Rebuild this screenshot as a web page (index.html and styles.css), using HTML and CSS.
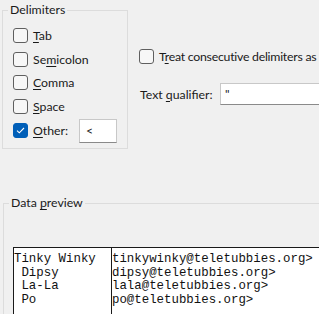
FILE: index.html
```html
<!DOCTYPE html>
<html lang="en">
<head>
<meta charset="UTF-8">
<title>Text Import Wizard</title>
<link rel="stylesheet" href="styles.css">
</head>
<body>

<div class="top-row">
    <!-- delimiters group -->
    <fieldset class="group delimiters">
        <legend>Delimiters</legend>
        <label class="row"><span class="box"></span><span><u>T</u>ab</span></label>
        <label class="row"><span class="box"></span><span>Se<u>m</u>icolon</span></label>
        <label class="row"><span class="box"></span><span><u>C</u>omma</span></label>
        <label class="row"><span class="box"></span><span><u>S</u>pace</span></label>
        <label class="row other"><span class="box checked">
            <svg width="15" height="15" viewBox="0 0 15 15"><path d="M4 7.6 L6.3 9.8 L11 5" fill="none" stroke="white" stroke-width="1.1"/></svg>
        </span><span class="other-text"><u>O</u>ther:</span><span class="field small">&lt;</span></label>
    </fieldset>

    <div class="options">
        <label class="row treat"><span class="box"></span><span class="treat-text">T<u>r</u>eat consecutive delimiters as</span></label>
        <div class="qualifier">
            <span class="qualifier-text">Text <u>q</u>ualifier:</span>
            <span class="field wide">"</span>
        </div>
    </div>
</div>

<fieldset class="group preview">
    <legend>Data <u>p</u>review</legend>
    <div class="grid">
        <div class="col first">Tinky Winky<br>&nbsp;Dipsy<br>&nbsp;La-La<br>&nbsp;Po</div>
        <div class="col">tinkywinky@teletubbies.org&gt;<br>dipsy@teletubbies.org&gt;<br>lala@teletubbies.org&gt;<br>po@teletubbies.org&gt;</div>
    </div>
</fieldset>

</body>
</html>
```

FILE: styles.css
```css
body, html {
    margin: 0;
    background-color: #f0f0f0;
    overflow: hidden;
}

body {
    width: 319px;
    height: 314px;
    font-family: 'Lato', 'Noto Sans', sans-serif;
    font-size: 12.3px;
    color: #1a1a1a;
}

u {
    text-decoration-thickness: 1px;
    text-underline-offset: 2px;
}

/* group boxes */
.group {
    border: 1px solid #dcdcdc;
    margin: 0;
    padding: 0 0 0 10px;
}

.group legend {
    padding: 0 2px;
    margin-left: -5px;
    line-height: 16px;
}

.top-row {
    display: flex;
    padding-top: 2px;
}

.delimiters {
    flex: none;
    margin-left: 2px;
    width: 126px;
    height: 147px;
    box-sizing: border-box;
    padding-top: 6px;
    display: flex;
    flex-direction: column;
}

.row {
    display: flex;
    align-items: center;
    gap: 5px;
    height: 23.5px;
}

.row.other {
    height: 25px;
}

.other-text {
    width: 41px;
    flex: none;
}

.box {
    width: 13px;
    height: 13px;
    border: 1px solid #5f5f5f;
    border-radius: 3px;
    background-color: #f7f7f7;
    flex: none;
    display: flex;
}

.box.checked {
    background-color: #005fb8;
    border-color: #005fb8;
}

.box svg {
    margin: -1px;
}

.field {
    background-color: white;
    border: 1px solid #c8c8c8;
    border-bottom-color: #8a8a8a;
    box-sizing: border-box;
    padding-left: 6px;
    line-height: 20px;
}

.field.small {
    width: 38px;
    height: 24px;
    line-height: 22px;
}

/* right side options */
.options {
    padding: 44px 0 0 11px;
    white-space: nowrap;
}

.treat {
    height: 20px;
}

.treat-text {
    letter-spacing: -0.25px;
}

.qualifier {
    display: flex;
    align-items: center;
    margin-top: 17px;
    padding-left: 1px;
}

.qualifier-text {
    width: 80px;
    flex: none;
}

.field.wide {
    width: 120px;
    height: 22px;
    padding-left: 4px;
}

/* data preview */
.preview {
    margin: 46px 0 0 3px;
    width: 360px;
    height: 160px;
    box-sizing: border-box;
}

.grid {
    display: flex;
    margin: 36px 0 0 -1px;
    background-color: white;
    border-top: 1px solid #1a1a1a;
    border-left: 1px solid #1a1a1a;
    height: 120px;
    font-family: 'Liberation Mono', 'Courier New', monospace;
    font-size: 12.4px;
    line-height: 13.5px;
    color: #111;
}

.col {
    padding-top: 5px;
    white-space: nowrap;
}

.col.first {
    width: 97px;
    border-right: 1px solid #1a1a1a;
}
```
